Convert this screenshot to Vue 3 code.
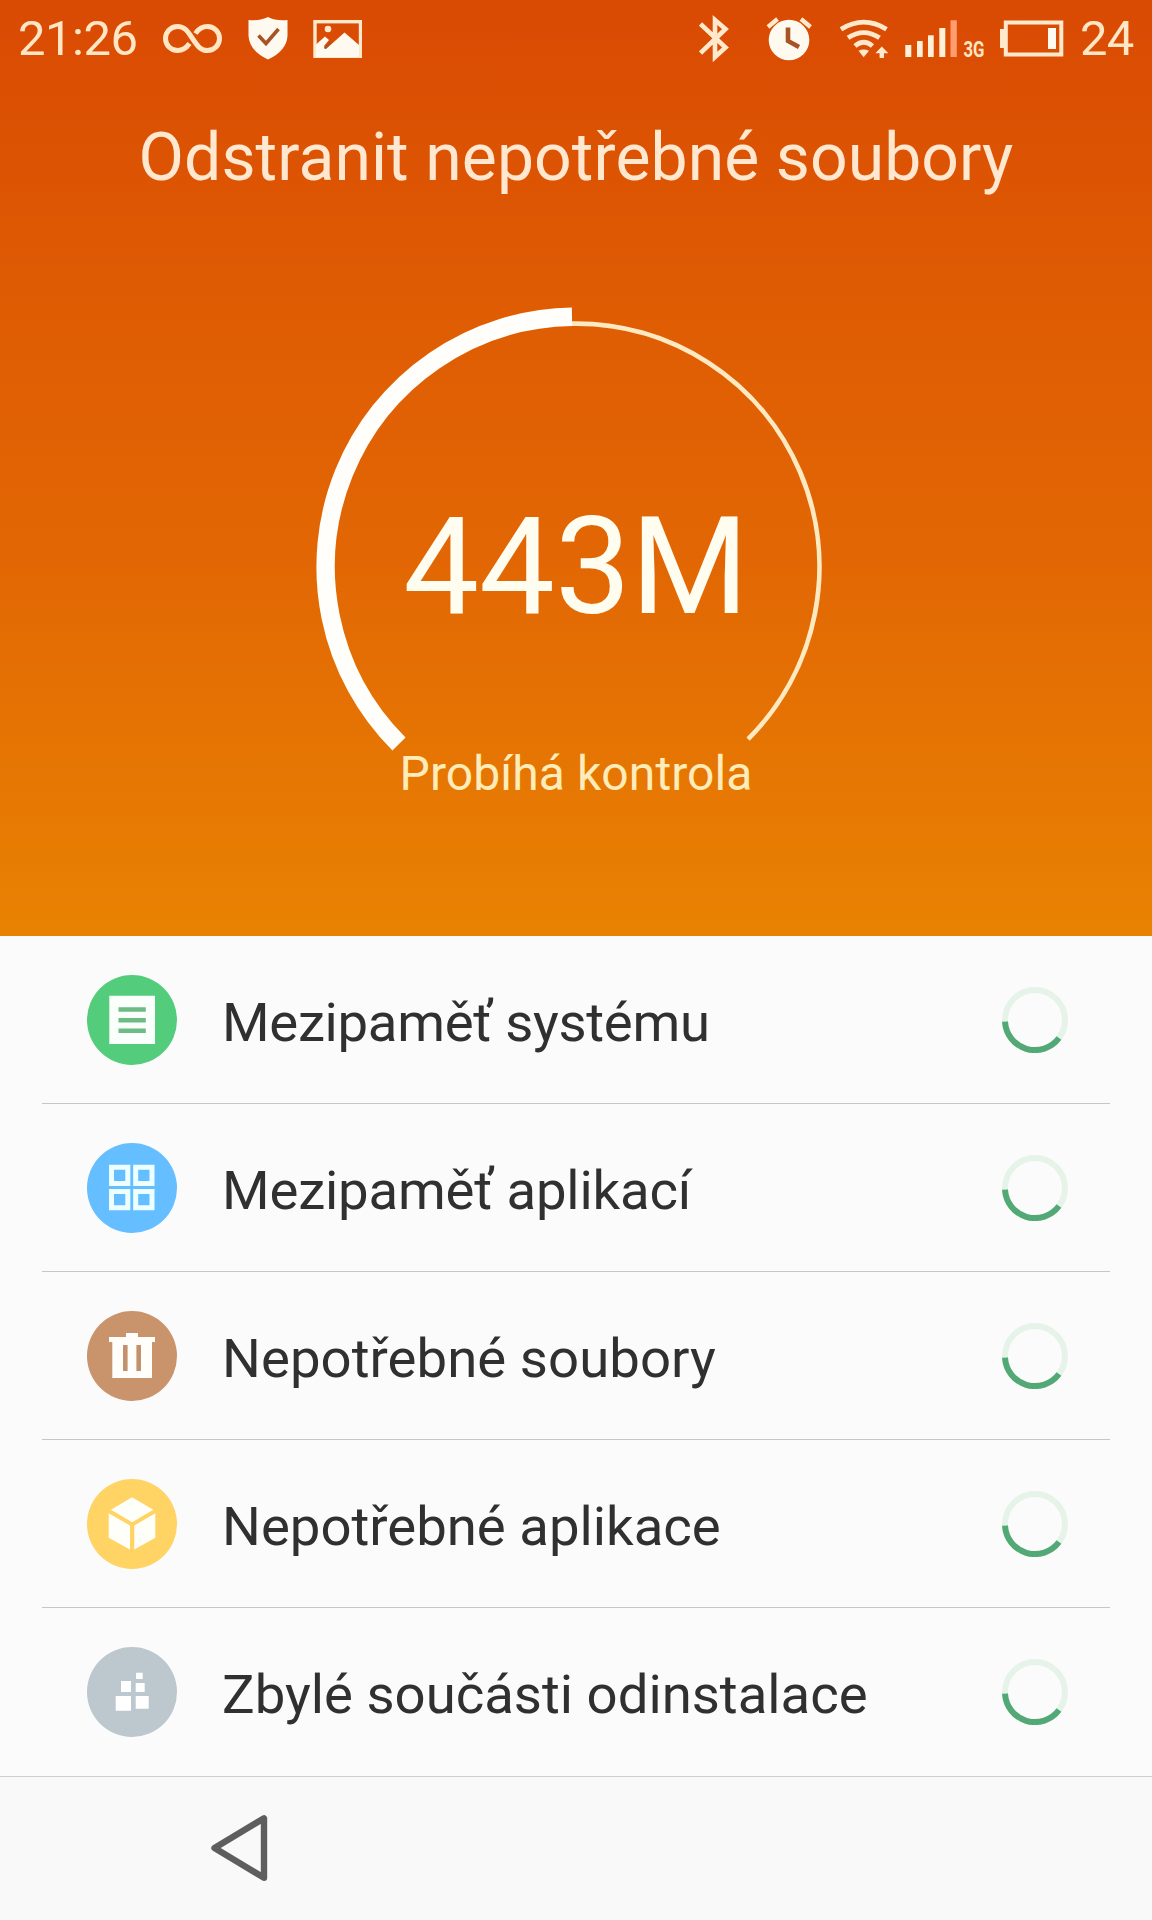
<script setup>
const rows = [
  { id: 'system', label: 'Mezipaměť systému', color: '#53cc7b', spacing: '-0.3px' },
  { id: 'apps', label: 'Mezipaměť aplikací', color: '#64beff', spacing: '-0.17px' },
  { id: 'junk', label: 'Nepotřebné soubory', color: '#c9936b', spacing: '0.05px' },
  { id: 'packages', label: 'Nepotřebné aplikace', color: '#ffd464', spacing: '0px' },
  { id: 'leftovers', label: 'Zbylé součásti odinstalace', color: '#bcc8cd', spacing: '0px' },
]
</script>

<template>
  <div class="screen">
    <header class="hero">
      <div class="status">
        <span class="time">21:26</span>
        <svg class="infinity" width="62" height="44" viewBox="162 16 62 44">
          <path d="M189.5 42.5Q184.500 49.500 177.500 49.500a12 12 0 0 1 0-24C185 25.500 188 31 192.500 37.500S200 49.500 207.500 49.500a12 12 0 0 0 0-24Q200 25.500 195.500 32.500" fill="none" stroke="#ffe6c4" stroke-width="5" />
        </svg>
        <svg class="shield" width="40" height="44" viewBox="247.500 16 40 44">
          <path d="M248 19Q260 20 267.500 16Q275 20 287 19V35Q286 50 267.500 58.500Q249 50 248 35z" fill="#fffaf0" />
          <path d="M258 34.500l7.500 8 12.500-14.500" fill="none" stroke="#a85324" stroke-width="3.600" />
        </svg>
        <svg class="picture" width="49" height="44" viewBox="313 16 49 44">
          <rect x="315" y="20.700" width="45.500" height="34.600" fill="none" stroke="#ffe9cc" stroke-width="3.400" />
          <circle cx="328" cy="28" r="3.300" fill="#ffe9cc" />
          <path d="M316 43.500l9-8 4 3.500-5 6 2 3 18.500-16.500L359 44v12H316z" fill="#fffaf0" />
          <path d="M324.500 47.500l7-7" stroke="#a85324" stroke-width="1.800" />
        </svg>
        <span class="grow"></span>
        <svg class="bluetooth" width="32" height="48" viewBox="699 14 32 48">
          <path d="M700.500 23L725.500 46.500L715 56V19L725.500 28L700.500 52" fill="none" stroke="#ffe9cc" stroke-width="4.600" />
        </svg>
        <svg class="alarm" width="46" height="48" viewBox="766 14 46 48">
          <circle cx="789" cy="39" r="20.300" fill="#fffaf0" />
          <path d="M788 26.500V40l11 6" fill="none" stroke="#a85324" stroke-width="4.600" />
          <path d="M768 26l9.500-8M810.500 26l-9.500-8" stroke="#ffe9cc" stroke-width="4.300" />
        </svg>
        <svg class="wifi" width="50" height="48" viewBox="839 14 50 48">
          <g fill="none" stroke="#ffe9cc" stroke-width="4.800">
            <path d="M841 28.200Q863.700 14 886.500 28.200" />
            <path d="M848 36.800Q863.700 26.500 879.500 36.800" />
            <path d="M855 45Q863.700 37.500 872.500 45" />
          </g>
          <path d="M858.500 49.800Q863.700 47 869 49.800L863.700 56.300z" fill="#ffe9cc" />
          <path d="M881.800 45.500l6.500 6.700h-4.300V57h-4.400v-4.800h-4.300z" fill="#ffe9cc" />
        </svg>
        <svg class="signal" width="86" height="56" viewBox="904 10 86 56">
          <g fill="#fff0da">
            <rect x="905.300" y="44" width="6" height="12" />
            <rect x="917" y="40" width="5.700" height="16" />
            <rect x="928" y="34.300" width="5.700" height="21.700" />
            <rect x="939.300" y="27" width="6" height="29" />
          </g>
          <rect x="950.500" y="19.300" width="6.300" height="36.700" fill="#ff9c70" />
          <text x="963.500" y="55.500" textLength="21" lengthAdjust="spacingAndGlyphs" class="net">3G</text>
        </svg>
        <svg class="battery" width="64" height="48" viewBox="1000 14 64 48">
          <rect x="1005.800" y="21.500" width="55.500" height="32" fill="none" stroke="#ffe9cc" stroke-width="4" />
          <rect x="1000" y="28" width="5" height="19" fill="#ffe9cc" />
          <rect x="1048" y="27" width="8" height="21" fill="#fffaf0" />
        </svg>
        <span class="level">24</span>
      </div>

      <h1 class="title">Odstranit nepotřebné soubory</h1>

      <div class="gauge">
        <svg width="520" height="520" viewBox="-260 -260 520 520" fill="none">
          <path d="M-4-243.400A243.400 243.400 0 0 1 172.100 172.100" stroke="#ffe9c0" stroke-width="4.700" />
          <path d="M-177 177A250.300 250.300 0 0 1-4-250.300" stroke="#fffefa" stroke-width="18.500" />
        </svg>
        <strong class="value">443M</strong>
        <span class="state">Probíhá kontrola</span>
      </div>
    </header>

    <ul class="list">
      <li v-for="row in rows" :key="row.id" class="row">
        <svg class="badge" width="90" height="90" viewBox="0 0 90 90">
          <circle cx="45" cy="45" r="45" :fill="row.color" />
          <template v-if="row.id === 'system'">
            <path d="M22.300 20.800h45.700v48.200H22.300z" fill="#fbfffb" />
            <path d="M31.500 34.500h27.300M31.500 45.200h27.300M31.500 55.700h27.300" stroke="#6dbb85" stroke-width="4.600" />
          </template>
          <path
            v-else-if="row.id === 'apps'"
            d="M24.500 24.200h16.300v16.300H24.500zM48.700 24.200H65v16.300H48.700zM24.500 48.500h16.300v16.300H24.500zM48.700 48.500H65v16.300H48.700z"
            fill="none" stroke="#edffff" stroke-width="5"
          />
          <template v-else-if="row.id === 'junk'">
            <path d="M22 26h17v-4h12v4h17v5h-3v36H25.300V31H22z" fill="#fffefa" />
            <path d="M38.300 34v26M51.700 34v26" stroke="#c3926c" stroke-width="4.600" />
          </template>
          <path
            v-else-if="row.id === 'packages'"
            d="M45 18.300l21.300 12.400L45.200 43.300 24 30.700zM21.700 34.300L43 46.500v24L21.700 58.700zM68.300 34.300L47.300 46.500v24l21-11.800z"
            fill="#fffffa"
          />
          <path
            v-else
            d="M28.700 49H44v14.700H28.700zM48.700 49h13v12.700h-13zM34 34h10v11H34zM48.700 36h9v9h-9zM49 25.700h6.700V32H49z"
            fill="#fff"
          />
        </svg>
        <span class="label" :style="{ letterSpacing: row.spacing }">{{ row.label }}</span>
        <svg class="spinner" width="66" height="66" viewBox="-33 -33 66 66" fill="none" stroke-width="6">
          <circle r="30" stroke="#e6f3e9" />
          <path d="M-30 1.600A30 30 0 0 0 24 18" stroke="#53a975" />
        </svg>
      </li>
    </ul>

    <nav class="nav">
      <svg width="60" height="70" viewBox="209 1813 60 70">
        <path d="M214.500 1848L264 1818.300v59.400z" fill="none" stroke="#5e5e5e" stroke-width="6.400" stroke-linejoin="round" />
      </svg>
    </nav>
  </div>
</template>

<style>
body {
  margin: 0;
}
</style>

<style scoped>
.screen {
  width: 1152px;
  height: 1920px;
  overflow: hidden;
  display: flex;
  flex-direction: column;
  background: #fbfbfb;
  font-family: Roboto, "Liberation Sans", sans-serif;
}
.hero {
  height: 936px;
  flex: none;
  background: linear-gradient(#d94a03, #df5c03 33%, #e26704 60%, #e98202);
}
.status {
  height: 78px;
  box-sizing: border-box;
  padding: 0 17px 0 18px;
  display: flex;
  align-items: center;
  color: #ffe6c4;
  font-size: 49px;
  line-height: 78px;
}
.time {
  width: 144px;
  letter-spacing: -0.500px;
}
.level {
  width: 55px;
  margin-left: 16px;
  letter-spacing: -0.700px;
}
.shield {
  margin-left: 23.500px;
}
.picture {
  margin-left: 25.500px;
}
.grow {
  flex: 1;
}
.alarm {
  margin-left: 35px;
}
.wifi {
  margin-left: 27px;
}
.signal {
  margin-left: 15px;
  overflow: visible;
}
.battery {
  margin-left: 10px;
}
.net {
  font: 700 22px Roboto, sans-serif;
  fill: #ffe6c4;
}
.title {
  margin: 0;
  height: 160px;
  line-height: 160px;
  text-align: center;
  font-size: 66px;
  font-weight: 400;
  letter-spacing: 0.100px;
  color: #ffe8cf;
}
.gauge {
  width: 520px;
  margin: 68.500px auto 0;
  display: grid;
  place-items: center;
}
.gauge > * {
  grid-area: 1 / 1;
}
.value {
  font-size: 135px;
  font-weight: 400;
  line-height: 160px;
  color: #fffdf0;
}
.state {
  align-self: end;
  margin-bottom: 25px;
  font-size: 48px;
  line-height: 56px;
  letter-spacing: 0.080px;
  color: #ffecb8;
}
.list {
  margin: 0 42px;
  padding: 0;
  list-style: none;
}
.row {
  height: 168px;
  box-sizing: border-box;
  padding: 0 42px 0 45px;
  display: flex;
  align-items: center;
  border-bottom: 1px solid #c6c6c6;
}
.row:last-child {
  border-bottom-color: transparent;
}
.label {
  flex: 1;
  margin-left: 45px;
  padding-top: 5px;
  font-size: 54.500px;
  line-height: 64px;
  white-space: nowrap;
  color: #303030;
}
.nav {
  flex: 1;
  box-sizing: border-box;
  padding: 0 0 1px 209px;
  display: flex;
  align-items: center;
  border-top: 1px solid #cfcfcf;
  background: #f9f9f9;
}
</style>
